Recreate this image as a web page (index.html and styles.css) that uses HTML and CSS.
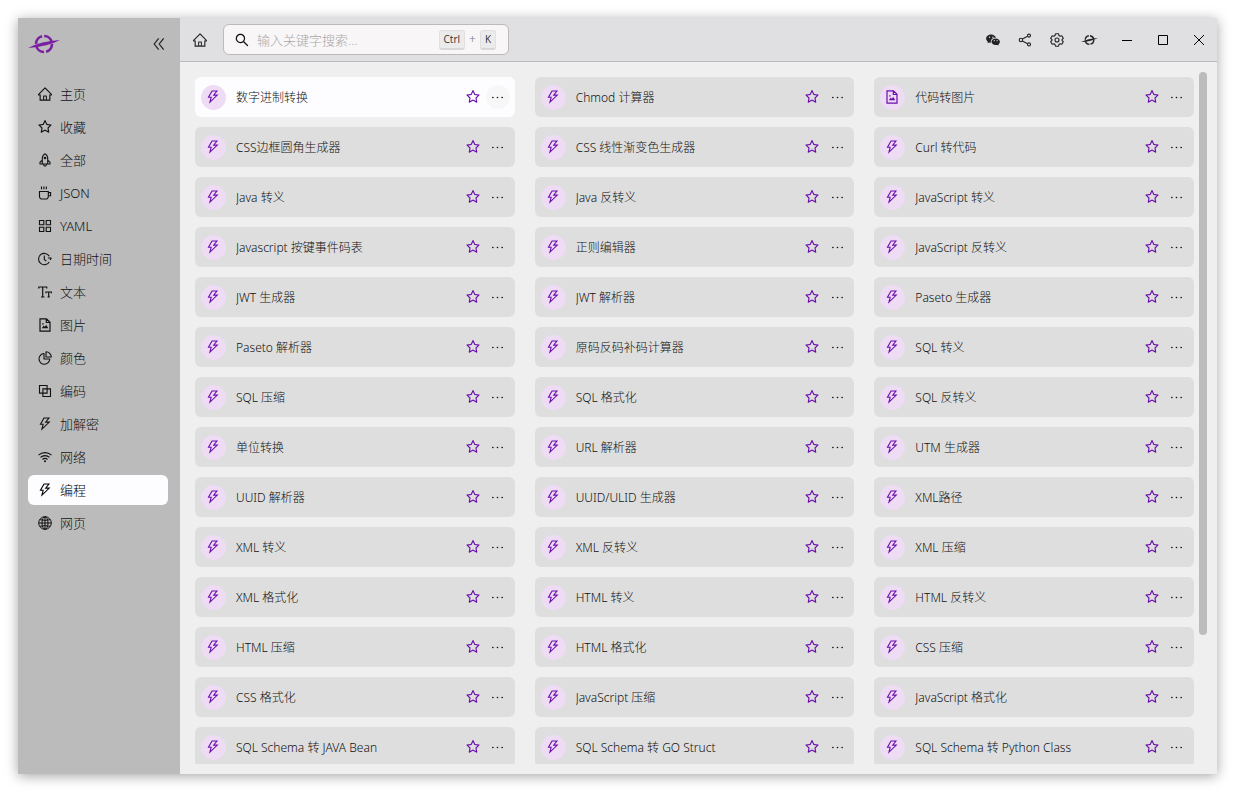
FILE: index.html
```html
<!DOCTYPE html>
<html lang="zh-CN">
<head>
<meta charset="utf-8">
<title>编程</title>
<link rel="stylesheet" href="styles.css">
</head>
<body>
<svg class="sprite" aria-hidden="true">
  <symbol id="star" viewBox="64 64 896 896"><path d="M908.1 353.1l-253.9-36.9L540.7 86.1c-3.1-6.3-8.2-11.4-14.5-14.5-15.8-7.8-35-1.3-42.9 14.5L369.8 316.2l-253.9 36.9c-7 1-13.4 4.3-18.3 9.3a32.05 32.05 0 00.6 45.3l183.7 179.1-43.4 252.9a31.95 31.95 0 0046.4 33.7L512 754l227.1 119.4c6.2 3.3 13.4 4.4 20.3 3.2 17.4-3 29.1-19.5 26.1-36.9l-43.4-252.9 183.7-179.1c5-4.9 8.3-11.3 9.3-18.3 2.7-17.5-9.5-33.7-27-36.3zM664.8 561.6l36.1 210.3L512 672.7 323.1 772l36.1-210.3-152.8-149L417.6 382 512 190.7 606.4 382l211.2 30.7-152.8 148.9z"/></symbol>
  <symbol id="bolt" viewBox="64 64 896 896"><path d="M848 359.3H627.7L825.8 109c4.1-5.3.4-13-6.3-13H436c-2.8 0-5.5 1.5-6.9 4L170 547.5c-3.1 5.3.7 12 6.9 12h174.4l-89.4 357.6c-1.9 7.8 7.5 13.3 13.3 7.7L853.5 373c5.2-4.9 1.7-13.7-5.5-13.7zM378.2 732.5l60.3-241H281.1l189.6-327.4h224.6L487 427.4h211L378.2 732.5z"/></symbol>
  <symbol id="home" viewBox="64 64 896 896"><path d="M946.5 505L560.1 118.8l-25.9-25.9a31.5 31.5 0 00-44.4 0L77.5 505a63.9 63.9 0 00-18.8 46c.4 35.2 29.7 63.3 64.9 63.3h42.5V940h691.8V614.3h43.4c17.1 0 33.2-6.7 45.3-18.8a63.6 63.6 0 0018.7-45.3c0-17-6.7-33.1-18.8-45.2zM568 868H456V664h112v204zm217.9-325.7V868H632V640c0-22.1-17.9-40-40-40H432c-22.1 0-40 17.9-40 40v228H238.1V542.3h-96l370-369.7 23.1 23.1L882 542.3h-96.1z"/></symbol>
  <symbol id="search" viewBox="64 64 896 896"><path d="M909.6 854.5L649.9 594.8C690.2 542.7 712 479 712 412c0-80.2-31.3-155.4-87.9-212.1-56.6-56.7-132-87.9-212.1-87.9s-155.5 31.3-212.1 87.9C143.2 256.5 112 331.8 112 412c0 80.1 31.3 155.5 87.9 212.1C256.5 680.8 331.8 712 412 712c67 0 130.6-21.8 182.7-62l259.7 259.6a8.2 8.2 0 0011.6 0l43.6-43.5a8.2 8.2 0 000-11.6zM570.4 570.4C528 612.7 471.8 636 412 636s-116-23.3-158.4-65.6C211.3 528 188 471.8 188 412s23.3-116.1 65.6-158.4C296 211.3 352.2 188 412 188s116.1 23.2 158.4 65.6S636 352.2 636 412s-23.3 116.1-65.6 158.4z"/></symbol>
  <symbol id="rocket" viewBox="0 0 14 14"><g fill="none" stroke="currentColor" stroke-width="1.1" stroke-linejoin="round"><path d="M4.300 11V4.600Q4.600 2 7 .8Q9.400 2 9.700 4.600V11zM4.300 7.200L2 9.200v1.800h2.300M9.700 7.200L12 9.200v1.800H9.700"/><circle cx="7" cy="5" r=".8"/><path d="M5.500 11q0 1.800 1.500 2.300q1.500-.5 1.500-2.300"/></g></symbol>
  <symbol id="cup" viewBox="0 0 14 14"><g fill="none" stroke="currentColor" stroke-width="1.1"><path d="M1.500 5.500h8.800v5a2.500 2.500 0 0 1-2.500 2.500H4a2.500 2.500 0 0 1-2.500-2.500zM10.300 6.600h2.300v3.200h-2.300M3.500.5v2.800M5.900.5v2.800M8.300.5v2.800"/></g></symbol>
  <symbol id="grid" viewBox="0 0 14 14"><path fill="none" stroke="currentColor" stroke-width="1.1" d="M1.500 1.500h4.300v4.300H1.500zM8.200 1.500h4.300v4.300H8.200zM1.500 8.200h4.300v4.300H1.500zM8.200 8.200h4.300v4.300H8.200z"/></symbol>
  <symbol id="clock" viewBox="0 0 14 14"><g fill="none" stroke="currentColor" stroke-width="1.1"><path d="M11.200 4.200A5.700 5.700 0 1 0 11.200 9.900M6.300 3.500v4l2 1.500M9.800 6h3.700M12 7.800l1.500-1.800"/></g></symbol>
  <symbol id="type" viewBox="0 0 14 14"><path fill="none" stroke="currentColor" stroke-width="1.2" d="M.8 3.600V2h7.900v1.600M4.700 2v10M3 12h3.500M8 8.300V7h5.400v1.300M10.700 7v5M9.500 12h2.400"/></symbol>
  <symbol id="image" viewBox="0 0 14 14"><path fill="none" stroke="currentColor" stroke-width="1.2" d="M2 .8h6.500L12 4.300v8.900H2zM8.300.8v3.700H12"/><path d="M3.800 10.300l2-2.700 1.100 1.300 1.200-2.200 2.200 3.600zM4.200 5.200h1.400v1.400H4.200z"/></symbol>
  <symbol id="pie" viewBox="0 0 14 14"><path fill="none" stroke="currentColor" stroke-width="1.1" stroke-linejoin="round" d="M6 2.500A5.400 5.400 0 1 0 11.800 8H6zM8 .8A5.300 5.300 0 0 1 13.300 6H8z"/></symbol>
  <symbol id="overlap" viewBox="0 0 14 14"><path fill="none" stroke="currentColor" stroke-width="1.1" d="M1.500 1.500h7.600v7.600H1.500zM4.900 4.900h7.600v7.600H4.900z"/></symbol>
  <symbol id="wifi" viewBox="0 0 14 14"><path fill="none" stroke="currentColor" stroke-width="1.1" d="M.5 5.200a9.500 9.500 0 0 1 13 0M2.500 7.400a6.500 6.500 0 0 1 9 0M4.500 9.500a3.700 3.700 0 0 1 5 0"/><circle cx="7" cy="11.200" r="1"/></symbol>
  <symbol id="globe" viewBox="0 0 14 14"><g fill="none" stroke="currentColor"><circle cx="7" cy="7" r="6.300"/><ellipse cx="7" cy="7" rx="3" ry="6.300"/><path d="M7 .7v12.600M.7 7h12.600M1.700 3.700q5.300 1.300 10.600 0M1.700 10.300q5.300-1.300 10.600 0"/></g></symbol>
  <symbol id="collapse" viewBox="0 0 14 14"><path fill="none" stroke="currentColor" stroke-width="1.2" d="M7.700 1.300L3.200 7l4.500 5.700M12.700 1.300L8.200 7l4.500 5.700"/></symbol>
  <symbol id="dots" viewBox="0 0 14 14"><circle cx="2" cy="7" r=".9"/><circle cx="7" cy="7" r=".9"/><circle cx="12" cy="7" r=".9"/></symbol>
  <symbol id="wechat" viewBox="0 0 14 14"><path fill-rule="evenodd" d="M5.200 1.400C2.300 1.400.1 3.200.1 5.600c0 1.300.7 2.400 1.800 3.200l-.5 1.500 1.800-.9q.8.300 1.700.3C4.300 6.700 6.600 4.700 9.900 4.800 9.400 2.800 7.500 1.400 5.200 1.400zM3.500 3.600a.7.700 0 1 1 0 1.400.7.700 0 0 1 0-1.400zM6.900 3.600a.7.700 0 1 1 0 1.400.7.700 0 0 1 0-1.400z"/><path fill-rule="evenodd" d="M9.700 5.400c2.300 0 4.200 1.500 4.200 3.400 0 1-.6 2-1.500 2.600l.4 1.200-1.500-.7q-.8.200-1.600.2c-2.400 0-4.200-1.500-4.200-3.300s1.900-3.400 4.200-3.400zM8.300 7.100a.6.600 0 1 0 0 1.200.6.600 0 0 0 0-1.200zM11.100 7.100a.6.600 0 1 0 0 1.200.6.600 0 0 0 0-1.200z"/></symbol>
  <symbol id="share" viewBox="0 0 14 14"><g fill="none" stroke="currentColor" stroke-width="1.1"><circle cx="2.900" cy="7" r="1.700"/><circle cx="11" cy="2.600" r="1.500"/><circle cx="11" cy="11.400" r="1.500"/><path d="M4.400 6.100l5.200-2.900M4.400 7.900l5.200 2.900"/></g></symbol>
  <symbol id="gear" viewBox="0 0 14 14"><g fill="none" stroke="currentColor" stroke-width="1.1" stroke-linejoin="round"><path d="M5.500.8h3l.5 1.700 1.100.7 1.700-.5 1.500 2.600L12.100 6.500v1L13.300 8.700l-1.500 2.600-1.700-.5-1.100.7-.5 1.700h-3L5 11.500l-1.100-.7-1.700.5L.7 8.700 1.900 7.500v-1L.7 5.300l1.500-2.600 1.700.5L5 2.500z"/><circle cx="7" cy="7" r="2"/></g></symbol>
  <symbol id="planet" viewBox="0 0 32 20"><circle cx="16" cy="10" r="8" fill="none" stroke="currentColor" stroke-width="2.600" stroke-dasharray="10.370 2.200" stroke-dashoffset="-1.100" transform="rotate(-8 16 10)"/><path d="M0 13.900Q13 7.200 32 6Q20 12.800 0 13.900z"/></symbol>
</svg>

<div class="window">
  <aside class="sidebar">
    <div class="brand">
      <svg class="logo" role="img" aria-label="Logo"><use href="#planet"/></svg>
      <button class="icon-button" aria-label="收起"><svg class="icon"><use href="#collapse"/></svg></button>
    </div>
    <nav class="menu">
      <a href="#"><svg class="icon"><use href="#home"/></svg>主页</a>
      <a href="#"><svg class="icon"><use href="#star"/></svg>收藏</a>
      <a href="#"><svg class="icon"><use href="#rocket"/></svg>全部</a>
      <a href="#"><svg class="icon"><use href="#cup"/></svg>JSON</a>
      <a href="#"><svg class="icon"><use href="#grid"/></svg>YAML</a>
      <a href="#"><svg class="icon"><use href="#clock"/></svg>日期时间</a>
      <a href="#"><svg class="icon"><use href="#type"/></svg>文本</a>
      <a href="#"><svg class="icon"><use href="#image"/></svg>图片</a>
      <a href="#"><svg class="icon"><use href="#pie"/></svg>颜色</a>
      <a href="#"><svg class="icon"><use href="#overlap"/></svg>编码</a>
      <a href="#"><svg class="icon"><use href="#bolt"/></svg>加解密</a>
      <a href="#"><svg class="icon"><use href="#wifi"/></svg>网络</a>
      <a href="#" class="active" aria-current="page"><svg class="icon"><use href="#bolt"/></svg>编程</a>
      <a href="#"><svg class="icon"><use href="#globe"/></svg>网页</a>
    </nav>
  </aside>
  <div class="content">
    <header class="toolbar">
      <button class="icon-button" aria-label="主页"><svg class="icon"><use href="#home"/></svg></button>
      <label class="search">
        <svg class="icon"><use href="#search"/></svg>
        <input type="text" placeholder="输入关键字搜索..." aria-label="搜索">
        <kbd>Ctrl</kbd><span class="plus">+</span><kbd>K</kbd>
      </label>
      <div class="actions">
        <button class="icon-button" aria-label="微信"><svg class="icon"><use href="#wechat"/></svg></button>
        <button class="icon-button" aria-label="分享"><svg class="icon"><use href="#share"/></svg></button>
        <button class="icon-button" aria-label="设置"><svg class="icon"><use href="#gear"/></svg></button>
        <button class="icon-button" aria-label="关于"><svg class="icon planet"><use href="#planet"/></svg></button>
      </div>
      <div class="window-controls">
        <button aria-label="最小化"><svg viewBox="0 0 12 12"><path d="M1 6.500h10"/></svg></button>
        <button aria-label="最大化"><svg viewBox="0 0 12 12"><path d="M1.500 1.500h9v9h-9z"/></svg></button>
        <button aria-label="关闭"><svg viewBox="0 0 12 12"><path d="M1 1l10 10M11 1L1 11"/></svg></button>
      </div>
    </header>
    <main class="viewport">
      <div class="tools" id="tools"></div>
      <div class="scroll-track"><div class="scroll-thumb"></div></div>
    </main>
  </div>
</div>
<script src="tools.js"></script>
</body>
</html>
```
FILE: styles.css
```css
* { box-sizing: border-box; }

body {
  margin: 0;
  height: 100vh;
  padding: 18px 19px 19px 18px;
  background: #fff;
  color: #111;
  font: 300 12px/18px "Noto Sans", "Noto Sans CJK SC", sans-serif;
}

button {
  border: 0;
  padding: 0;
  background: none;
  color: inherit;
  font: inherit;
  cursor: pointer;
}

svg { display: block; fill: currentColor; }
.sprite { position: absolute; width: 0; height: 0; }
.icon { width: 14px; height: 14px; flex: none; }

.window {
  display: flex;
  height: 100%;
  background: #efefef;
  box-shadow: 0 2px 12px rgba(0, 0, 0, 0.36);
}

.sidebar { flex: none; width: 162px; padding: 0 12px 0 10px; background: #bbb; }
.brand { display: flex; align-items: center; justify-content: space-between; height: 52px; margin-bottom: 9px; }
.logo { width: 32px; height: 20px; color: #7b1fa2; }
.icon-button { display: grid; place-items: center; width: 20px; height: 20px; color: #222; }

.menu { display: flex; flex-direction: column; gap: 3px; font-size: 13px; }
.menu a {
  display: flex;
  align-items: center;
  gap: 8px;
  height: 30px;
  padding: 0 10px;
  border-radius: 6px;
  color: #111;
  text-decoration: none;
}
.menu .active { background: #fdfdff; color: #000; }

.content { display: flex; flex: 1; flex-direction: column; min-width: 0; }

.toolbar {
  display: flex;
  align-items: center;
  flex: none;
  height: 44px;
  padding: 0 0 0 10px;
  background: #e0e0e2;
  border-bottom: 1px solid #bcbcbf;
}

.search {
  display: flex;
  align-items: center;
  width: 286px;
  height: 31px;
  margin-left: 13px;
  padding: 0 12px 0 11px;
  border: 1px solid #bbb;
  border-radius: 6px;
  background: #f8f6f7;
}
.search input {
  flex: 1;
  min-width: 0;
  margin-left: 8px;
  padding: 0;
  border: 0;
  outline: 0;
  background: none;
  font: 300 13px/20px "Noto Sans", "Noto Sans CJK SC", sans-serif;
}
.search input::placeholder { color: #a8a8a8; }
kbd {
  padding: 0 4px;
  border: 1px solid #e0e0e0;
  border-bottom: 2px solid #d8d8d8;
  border-radius: 3px;
  background: #ebebeb;
  color: #333;
  font: 10px/17px "Open Sans", sans-serif;
}
.plus { padding: 0 4px; color: #777; }

.actions { display: flex; gap: 12px; margin-left: auto; }
.planet { width: 17px; }
.window-controls { display: flex; margin-left: 10px; }
.window-controls button { display: grid; place-items: center; width: 36px; height: 30px; color: #000; }
.window-controls svg { width: 12px; height: 12px; fill: none; stroke: currentColor; }

.viewport { position: relative; flex: 1; min-height: 0; margin: 10px 10px 10px 15px; padding: 5px 13px 0 0; overflow: hidden; }
.tools { display: grid; grid-template-columns: repeat(3, minmax(0, 1fr)); gap: 10px 20px; }

.card {
  display: flex;
  align-items: center;
  height: 40px;
  padding: 0 5px 0 6px;
  border-radius: 6px;
  background: #dedede;
}
.card.hovered { background: #fdfdff; }
.badge {
  display: flex;
  align-items: center;
  width: 25px;
  height: 25px;
  margin-right: 10px;
  padding-left: 5px;
  border-radius: 50%;
  background: #eedcf5;
  color: #6a0dad;
}
.name { flex: 1; min-width: 0; padding-top: 1px; overflow: hidden; white-space: nowrap; }
.favorite { width: 24px; height: 24px; display: grid; place-items: center; color: #6a0dad; }
.more { width: 24px; height: 24px; display: grid; place-items: center; margin-left: 1px; border-radius: 50%; }
.more .icon { width: 13px; height: 13px; }
.hovered .more { background: #f7f7f8; }

.scroll-track { position: absolute; top: 0; right: 0; bottom: 0; width: 8px; }
.scroll-thumb { height: 81.4%; border-radius: 4px; background: #bcbcbc; }
```
FILE: tools.js
```js
const names = [
  "数字进制转换", "Chmod 计算器", "代码转图片",
  "CSS边框圆角生成器", "CSS 线性渐变色生成器", "Curl 转代码",
  "Java 转义", "Java 反转义", "JavaScript 转义",
  "Javascript 按键事件码表", "正则编辑器", "JavaScript 反转义",
  "JWT 生成器", "JWT 解析器", "Paseto 生成器",
  "Paseto 解析器", "原码反码补码计算器", "SQL 转义",
  "SQL 压缩", "SQL 格式化", "SQL 反转义",
  "单位转换", "URL 解析器", "UTM 生成器",
  "UUID 解析器", "UUID/ULID 生成器", "XML路径",
  "XML 转义", "XML 反转义", "XML 压缩",
  "XML 格式化", "HTML 转义", "HTML 反转义",
  "HTML 压缩", "HTML 格式化", "CSS 压缩",
  "CSS 格式化", "JavaScript 压缩", "JavaScript 格式化",
  "SQL Schema 转 JAVA Bean", "SQL Schema 转 GO Struct", "SQL Schema 转 Python Class"
];
const icon = id => `<svg class="icon"><use href="#${id}"/></svg>`;

document.getElementById("tools").innerHTML = names.map((name, i) => `
  <article class="card${i === 0 ? " hovered" : ""}">
    <span class="badge">${icon(name === "代码转图片" ? "image" : "bolt")}</span>
    <span class="name">${name}</span>
    <button class="favorite" aria-label="收藏 ${name}">${icon("star")}</button>
    <button class="more" aria-label="更多 ${name}">${icon("dots")}</button>
  </article>`).join("");
```
